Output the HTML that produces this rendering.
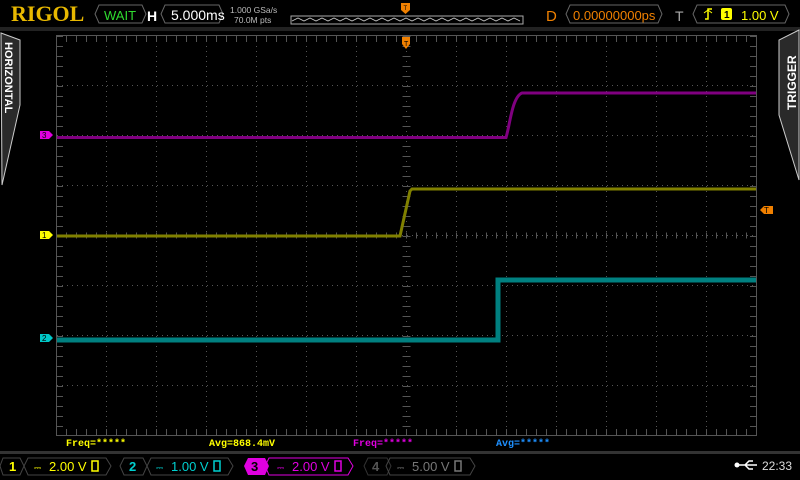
<!DOCTYPE html>
<html><head><style>
body{margin:0;width:800px;height:480px;background:#000;overflow:hidden;font-family:"Liberation Sans",sans-serif}
</style></head><body>
<svg width="800" height="480" viewBox="0 0 800 480" xmlns="http://www.w3.org/2000/svg" style="position:absolute;left:0;top:0">
<rect x="0" y="0" width="800" height="27" fill="#000"/>
<rect x="0" y="27" width="800" height="4" fill="#222"/>
<text x="11" y="21" font-family="Liberation Serif" font-weight="bold" font-size="22" fill="#e8b800">RIGOL</text>
<polygon points="99,5 142,5 146,14 142,23 99,23 95,14" fill="none" stroke="#666"/>
<text x="104" y="20" font-size="13" fill="#2fdc2f">WAIT</text>
<text x="147" y="21" font-size="14" font-weight="bold" fill="#fff">H</text>
<polygon points="165,5 219,5 223,14 219,23 165,23 161,14" fill="none" stroke="#666"/>
<text x="171" y="20" font-size="14" fill="#fff">5.000ms</text>
<text x="230" y="13" font-size="8.5" fill="#bbb">1.000 GSa/s</text>
<text x="234" y="23" font-size="8.5" fill="#bbb">70.0M pts</text>
<rect x="291" y="16" width="232" height="8" fill="none" stroke="#aaa"/>
<path d="M292,21 l6,-3 6,3 6,-3 6,3 6,-3 6,3 6,-3 6,3 6,-3 6,3 6,-3 6,3 6,-3 6,3 6,-3 6,3 6,-3 6,3 6,-3 6,3 6,-3 6,3 6,-3 6,3 6,-3 6,3 6,-3 6,3 6,-3 6,3 6,-3 6,3 6,-3 6,3 6,-3 6,3 6,-3 6,3" fill="none" stroke="#ccc" stroke-width="0.8"/>
<path d="M401,3 h9 v7 l-4.5,4 -4.5,-4z" fill="#f08000"/>
<text x="403.5" y="10" font-size="6" fill="#000">T</text>
<text x="546" y="21" font-size="15" fill="#f08000">D</text>
<polygon points="570,5 658,5 662,14 658,23 570,23 566,14" fill="none" stroke="#666"/>
<text x="573" y="20" font-size="13" fill="#f08000">0.00000000ps</text>
<text x="675" y="21" font-size="14" fill="#aaa">T</text>
<polygon points="697,5 785,5 789,14 785,23 697,23 693,14" fill="none" stroke="#666"/>
<path d="M705,19 h3 v-10 h4" stroke="#ff0" stroke-width="1.5" fill="none"/><path d="M704,13 l4,-3 4,3" stroke="#ff0" fill="none"/>
<rect x="721" y="8" width="11" height="12" rx="2" fill="#ff0"/><text x="724" y="18" font-size="10" font-weight="bold" fill="#000">1</text>
<text x="741" y="20" font-size="13" fill="#ff0">1.00 V</text>
<path d="M1,33 L20,40 L20,105 L2,185 Z" fill="#2a2a2a" stroke="#ccc"/>
<text transform="translate(5,42) rotate(90)" font-size="11" font-weight="bold" fill="#fff">HORIZONTAL</text>
<path d="M799,30 L779,40 L779,115 L799,180 Z" fill="#2a2a2a" stroke="#ccc"/>
<text transform="translate(796,110) rotate(-90)" font-size="12" font-weight="bold" fill="#fff">TRIGGER</text>
<rect x="56.5" y="35.5" width="700" height="400" fill="none" stroke="#555"/>
<g stroke="#555" stroke-dasharray="1 4">
<line x1="106.5" y1="36" x2="106.5" y2="435"/><line x1="156.5" y1="36" x2="156.5" y2="435"/><line x1="206.5" y1="36" x2="206.5" y2="435"/><line x1="256.5" y1="36" x2="256.5" y2="435"/><line x1="306.5" y1="36" x2="306.5" y2="435"/><line x1="356.5" y1="36" x2="356.5" y2="435"/><line x1="456.5" y1="36" x2="456.5" y2="435"/><line x1="506.5" y1="36" x2="506.5" y2="435"/><line x1="556.5" y1="36" x2="556.5" y2="435"/><line x1="606.5" y1="36" x2="606.5" y2="435"/><line x1="656.5" y1="36" x2="656.5" y2="435"/><line x1="706.5" y1="36" x2="706.5" y2="435"/>
<line x1="57" y1="85.5" x2="756" y2="85.5"/><line x1="57" y1="135.5" x2="756" y2="135.5"/><line x1="57" y1="185.5" x2="756" y2="185.5"/><line x1="57" y1="285.5" x2="756" y2="285.5"/><line x1="57" y1="335.5" x2="756" y2="335.5"/><line x1="57" y1="385.5" x2="756" y2="385.5"/>
<line x1="406.5" y1="36" x2="406.5" y2="435"/><line x1="57" y1="235.5" x2="756" y2="235.5"/>
</g>
<g stroke="#555" stroke-dasharray="1 9">
<line x1="56" y1="39" x2="756" y2="39" stroke-width="6"/>
<line x1="56" y1="432" x2="756" y2="432" stroke-width="6"/>
<line x1="56" y1="235.5" x2="756" y2="235.5" stroke-width="6"/>
<line x1="60" y1="36" x2="60" y2="435" stroke-width="6"/>
<line x1="753" y1="36" x2="753" y2="435" stroke-width="6"/>
<line x1="406.5" y1="36" x2="406.5" y2="435" stroke-width="8"/>
</g>
<path d="M57,137.5 H506 C510,125 512,97 522,93 H756" fill="none" stroke="#800080" stroke-width="3"/>
<path d="M57,236 H400 L410,191 L412,189 H756" fill="none" stroke="#808000" stroke-width="3"/>
<path d="M57,340 H498 V280 H756" fill="none" stroke="#008080" stroke-width="5"/>
<path d="M402,37 h8 v7 l-4,5 -4,-5z" fill="#f08000"/>
<text x="404" y="46" font-size="7" fill="#000">T</text>
<path d="M40,131 h9 l4,4 -4,4 h-9z" fill="#e000e0"/><text x="42" y="138" font-size="8" fill="#000">3</text>
<path d="M40,231 h9 l4,4 -4,4 h-9z" fill="#ff0"/><text x="42" y="238" font-size="8" fill="#000">1</text>
<path d="M40,334 h9 l4,4 -4,4 h-9z" fill="#00c8c8"/><text x="42" y="341" font-size="8" fill="#000">2</text>
<path d="M773,206 h-9 l-4,4 4,4 h9z" fill="#f08000"/><text x="764" y="213" font-size="8" fill="#000">T</text>
<g font-family="Liberation Mono" font-size="10" font-weight="bold">
<text x="66" y="446" fill="#ff0">Freq=*****</text>
<text x="209" y="446" fill="#ff0">Avg=868.4mV</text>
<text x="353" y="446" fill="#e000e0">Freq=*****</text>
<text x="496" y="446" fill="#1e90ff">Avg=*****</text>
</g>
<rect x="0" y="451" width="800" height="3" fill="#333"/>
<g font-size="13">
<polygon points="3,458 20,458 24,466 20,475 3,475 0,466" fill="none" stroke="#444"/>
<text x="9" y="471" fill="#ff0" font-weight="bold">1</text>
<polygon points="28,458 106,458 111,466 106,475 28,475 24,466" fill="none" stroke="#444"/>
<text x="34" y="471" font-size="9" fill="#ff0">⎓</text><text x="49" y="471" fill="#ff0">2.00 V</text>
<rect x="92" y="461" width="6" height="10" fill="none" stroke="#ff0" stroke-width="1.5"/>
<polygon points="124,458 143,458 147,466 143,475 124,475 120,466" fill="none" stroke="#444"/>
<text x="129" y="471" fill="#00d0d0" font-weight="bold">2</text>
<polygon points="151,458 228,458 233,466 228,475 151,475 147,466" fill="none" stroke="#444"/>
<text x="156" y="471" font-size="9" fill="#00d0d0">⎓</text><text x="171" y="471" fill="#00d0d0">1.00 V</text>
<rect x="214" y="461" width="6" height="10" fill="none" stroke="#00d0d0" stroke-width="1.5"/>
<polygon points="248,458 265,458 269,466 265,475 248,475 244,466" fill="#e000e0"/>
<text x="251" y="471" fill="#000" font-weight="bold">3</text>
<polygon points="269,458 348,458 353,466 348,475 269,475 265,466" fill="none" stroke="#e000e0"/>
<text x="277" y="471" font-size="9" fill="#e000e0">⎓</text><text x="292" y="471" fill="#e000e0">2.00 V</text>
<rect x="335" y="461" width="6" height="10" fill="none" stroke="#e000e0" stroke-width="1.5"/>
<polygon points="368,458 387,458 391,466 387,475 368,475 364,466" fill="none" stroke="#333"/>
<text x="372" y="471" fill="#555" font-weight="bold">4</text>
<polygon points="390,458 470,458 475,466 470,475 390,475 386,466" fill="none" stroke="#444"/>
<text x="397" y="471" font-size="9" fill="#777">⎓</text><text x="412" y="471" fill="#777">5.00 V</text>
<rect x="455" y="461" width="6" height="10" fill="none" stroke="#777" stroke-width="1.5"/>
<path d="M737,465 h20 M745,465 l4,-4 h4 M745,465 l4,4 h4" stroke="#fff" stroke-width="1.5" fill="none"/>
<circle cx="737" cy="465" r="2.5" fill="#fff"/>
<text x="762" y="470" font-size="12" fill="#ddd">22:33</text>
</g>
</svg>
</body></html>
